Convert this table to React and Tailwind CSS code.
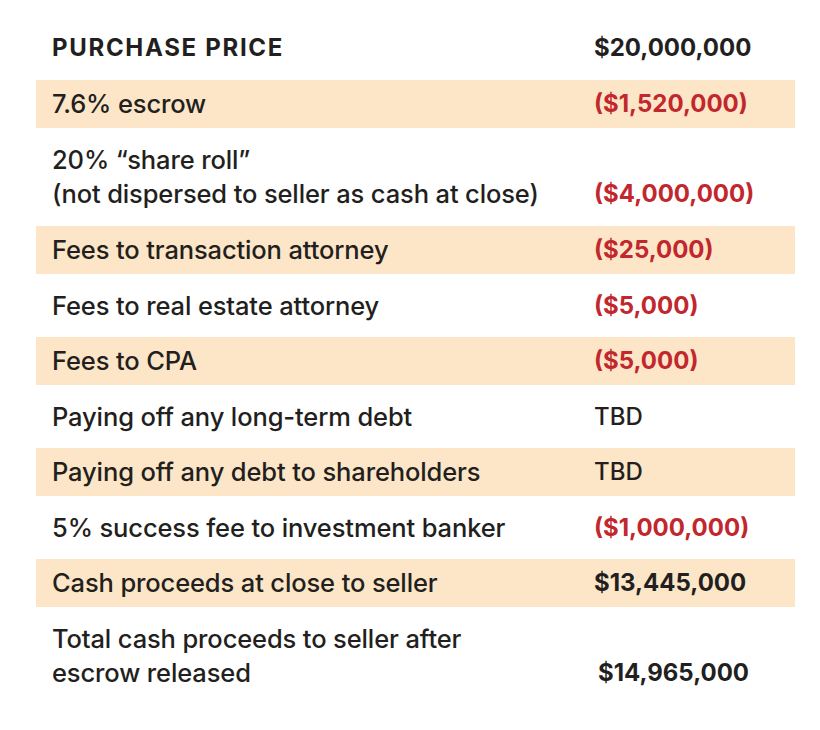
const ROWS = [
  { label: ['7.6% escrow'], value: '($1,520,000)', tone: 'red', band: true },
  { label: ['20% “share roll”', '(not dispersed to seller as cash at close)'], value: '($4,000,000)', tone: 'red' },
  { label: ['Fees to transaction attorney'], value: '($25,000)', tone: 'red', band: true },
  { label: ['Fees to real estate attorney'], value: '($5,000)', tone: 'red' },
  { label: ['Fees to CPA'], value: '($5,000)', tone: 'red', band: true },
  { label: ['Paying off any long-term debt'], value: 'TBD', tone: 'plain' },
  { label: ['Paying off any debt to shareholders'], value: 'TBD', tone: 'plain', band: true },
  { label: ['5% success fee to investment banker'], value: '($1,000,000)', tone: 'red' },
  { label: ['Cash proceeds at close to seller'], value: '$13,445,000', tone: 'bold', band: true },
  { label: ['Total cash proceeds to seller after', 'escrow released'], value: '$14,965,000', tone: 'bold', shift: true },
];

const VALUE_TONES = {
  red: 'font-bold text-[#c1272d]',
  plain: 'font-medium text-[#231f20]',
  bold: 'font-bold text-[#231f20]',
};

function Row({ row }) {
  const twoLine = row.label.length > 1;
  return (
    <div
      className={
        'flex ' +
        (row.band ? 'bg-[#fce6c7] h-[48px] items-center ' : '') +
        (!row.band && !twoLine ? 'h-[63px] items-center ' : '') +
        (twoLine ? 'py-[15px] items-end ' : '')
      }
    >
      <div className="w-[558px] pl-4 text-[25.5px] leading-[34px] tracking-[-0.005em]">
        {row.label.map((line) => (
          <div key={line}>{line}</div>
        ))}
      </div>
      <div className={'text-[24px] leading-[34px] ' + (row.shift ? 'pl-1 ' : '') + VALUE_TONES[row.tone]}>{row.value}</div>
    </div>
  );
}

export default function App() {
  return (
    <div className="w-[820px] h-[730px] bg-white pl-9 pt-4 font-medium text-[#231f20]" style={{ fontFamily: 'Inter, "Noto Sans", sans-serif' }}>
      <div className="w-[759px]">
        {/* Header */}
        <div className="flex h-[64px] items-center text-[24px]">
          <div className="w-[558px] pl-4 font-bold uppercase tracking-[0.07em]">Purchase Price</div>
          <div className="font-bold">$20,000,000</div>
        </div>

        {ROWS.map((row) => (
          <Row key={row.label[0]} row={row} />
        ))}
      </div>
    </div>
  );
}
